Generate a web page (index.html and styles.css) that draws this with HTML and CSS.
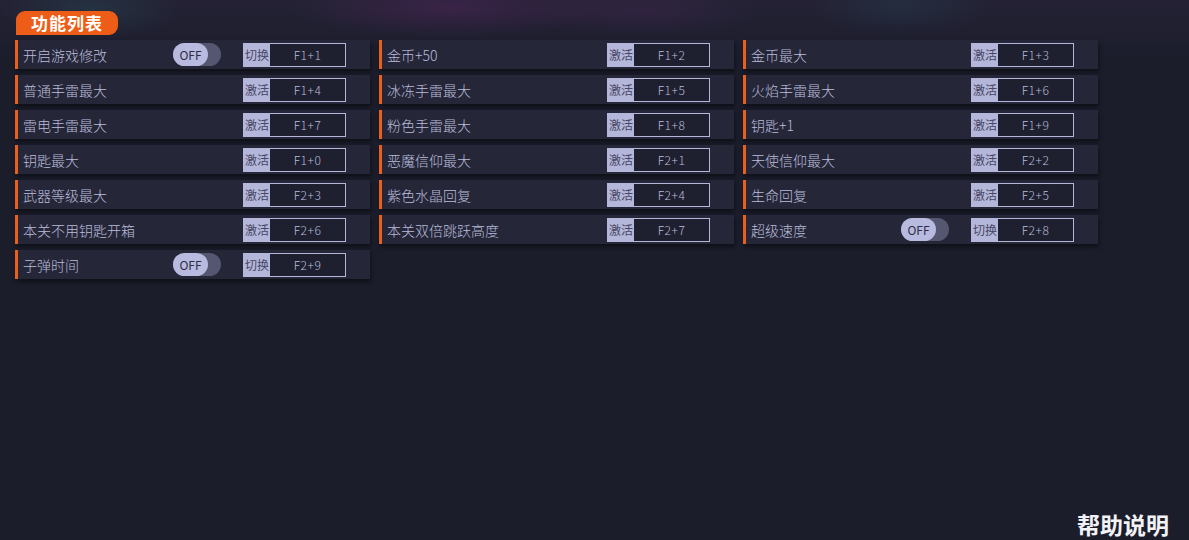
FILE: index.html
```html
<!DOCTYPE html>
<html lang="zh-CN">
<head>
    <meta charset="UTF-8">
    <meta name="viewport" content="width=device-width, initial-scale=1.0">
    <title>功能列表</title>
    <link rel="stylesheet" href="styles.css">
</head>
<body>
    <div class="backdrop"></div>

    <div class="panel">
        <div class="title">功能列表</div>

        <div class="list">
            <div class="row">
                <span class="name">开启游戏修改</span>
                <span class="toggle"><span class="knob">OFF</span></span>
                <span class="key"><span class="mode">切换</span><span class="combo">F1+1</span></span>
            </div>
            <div class="row">
                <span class="name">金币+50</span>
                <span class="key"><span class="mode">激活</span><span class="combo">F1+2</span></span>
            </div>
            <div class="row">
                <span class="name">金币最大</span>
                <span class="key"><span class="mode">激活</span><span class="combo">F1+3</span></span>
            </div>

            <div class="row">
                <span class="name">普通手雷最大</span>
                <span class="key"><span class="mode">激活</span><span class="combo">F1+4</span></span>
            </div>
            <div class="row">
                <span class="name">冰冻手雷最大</span>
                <span class="key"><span class="mode">激活</span><span class="combo">F1+5</span></span>
            </div>
            <div class="row">
                <span class="name">火焰手雷最大</span>
                <span class="key"><span class="mode">激活</span><span class="combo">F1+6</span></span>
            </div>

            <div class="row">
                <span class="name">雷电手雷最大</span>
                <span class="key"><span class="mode">激活</span><span class="combo">F1+7</span></span>
            </div>
            <div class="row">
                <span class="name">粉色手雷最大</span>
                <span class="key"><span class="mode">激活</span><span class="combo">F1+8</span></span>
            </div>
            <div class="row">
                <span class="name">钥匙+1</span>
                <span class="key"><span class="mode">激活</span><span class="combo">F1+9</span></span>
            </div>

            <div class="row">
                <span class="name">钥匙最大</span>
                <span class="key"><span class="mode">激活</span><span class="combo">F1+0</span></span>
            </div>
            <div class="row">
                <span class="name">恶魔信仰最大</span>
                <span class="key"><span class="mode">激活</span><span class="combo">F2+1</span></span>
            </div>
            <div class="row">
                <span class="name">天使信仰最大</span>
                <span class="key"><span class="mode">激活</span><span class="combo">F2+2</span></span>
            </div>

            <div class="row">
                <span class="name">武器等级最大</span>
                <span class="key"><span class="mode">激活</span><span class="combo">F2+3</span></span>
            </div>
            <div class="row">
                <span class="name">紫色水晶回复</span>
                <span class="key"><span class="mode">激活</span><span class="combo">F2+4</span></span>
            </div>
            <div class="row">
                <span class="name">生命回复</span>
                <span class="key"><span class="mode">激活</span><span class="combo">F2+5</span></span>
            </div>

            <div class="row">
                <span class="name">本关不用钥匙开箱</span>
                <span class="key"><span class="mode">激活</span><span class="combo">F2+6</span></span>
            </div>
            <div class="row">
                <span class="name">本关双倍跳跃高度</span>
                <span class="key"><span class="mode">激活</span><span class="combo">F2+7</span></span>
            </div>
            <div class="row">
                <span class="name">超级速度</span>
                <span class="toggle"><span class="knob">OFF</span></span>
                <span class="key"><span class="mode">切换</span><span class="combo">F2+8</span></span>
            </div>

            <div class="row">
                <span class="name">子弹时间</span>
                <span class="toggle"><span class="knob">OFF</span></span>
                <span class="key"><span class="mode">切换</span><span class="combo">F2+9</span></span>
            </div>
        </div>
    </div>

    <div class="help">帮助说明</div>
</body>
</html>
```

FILE: styles.css
```css
html, body {
    margin: 0;
    padding: 0;
}
body {
    width: 1189px;
    height: 540px;
    overflow: hidden;
    position: relative;
    display: flex;
    flex-direction: column;
    background-color: #1b1d2b;
    font-family: "Noto Sans CJK SC", "Noto Sans", sans-serif;
}
/* blurred game art behind the header */
.backdrop {
    position: absolute;
    left: 0;
    top: 0;
    width: 100%;
    height: 60px;
    background:
        radial-gradient(ellipse 90px 30px at 90px 10px, rgba(40, 90, 100, 0.3), transparent),
        radial-gradient(ellipse 160px 30px at 450px 8px, rgba(100, 40, 110, 0.35), transparent),
        radial-gradient(ellipse 120px 28px at 640px 10px, rgba(80, 40, 95, 0.3), transparent),
        radial-gradient(ellipse 90px 30px at 900px 6px, rgba(40, 80, 100, 0.25), transparent),
        linear-gradient(to bottom, #242234 0%, #1f1f30 55%, #1b1d2b 100%);
}
.panel {
    position: relative;
    padding: 11px 0 0 15px;
}
.title {
    width: 102px;
    height: 24px;
    margin-left: 1px;
    margin-bottom: 5px;
    border-radius: 9px 9px 9px 0;
    background-color: #ee5d17;
    color: #ffffff;
    font-size: 17px;
    font-weight: bold;
    line-height: 24px;
    text-align: center;
    letter-spacing: 1px;
}
.list {
    display: grid;
    grid-template-columns: repeat(3, 355px);
    column-gap: 9px;
    row-gap: 6px;
}
.row {
    display: flex;
    align-items: center;
    height: 29px;
    border-left: 3px solid #e8601c;
    background-color: #252739;
    box-shadow: 1px 3px 4px rgba(0, 0, 0, 0.45);
}
.name {
    flex: 1;
    padding-left: 5px;
    color: #babcda;
    font-size: 14px;
    font-weight: 300;
}
.toggle {
    display: flex;
    width: 48px;
    height: 23px;
    margin-right: 22px;
    border-radius: 12px;
    background-color: #555771;
}
.knob {
    width: 35px;
    height: 23px;
    border-radius: 12px;
    background-color: #b8badf;
    color: #2c2d44;
    font-size: 12px;
    line-height: 23px;
    text-align: center;
}
.key {
    display: flex;
    width: 103px;
    height: 24px;
    margin-right: 24px;
    box-sizing: border-box;
    border: 1px solid #b4b6da;
}
.mode {
    width: 26px;
    background-color: #b4b6da;
    color: #474864;
    font-size: 12px;
    line-height: 22px;
    text-align: center;
}
.combo {
    flex: 1;
    color: #babcda;
    font-size: 12px;
    font-weight: 300;
    line-height: 22px;
    text-align: center;
    letter-spacing: 0.5px;
    background-color: #1e2030;
}
.help {
    margin-top: auto;
    padding: 0 20px 1px 0;
    text-align: right;
    color: #f2f2f6;
    font-size: 23px;
    font-weight: bold;
    line-height: 30px;
}
```
